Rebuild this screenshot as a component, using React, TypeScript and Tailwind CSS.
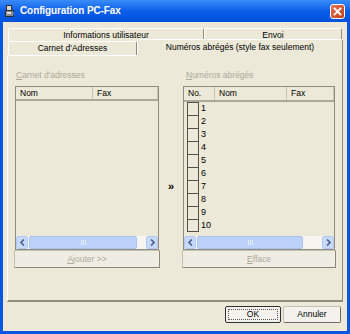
import React from 'react';

const grayText = 'text-[#aca899]';

function FaxIcon() {
  return (
    <svg width="12" height="14" viewBox="0 0 12 14">
      <rect x="2.5" y="1.5" width="5" height="5" fill="#d6d6d6" stroke="#2d2d2d" />
      <rect x="1.5" y="6.5" width="8" height="6" fill="#8c8c8c" stroke="#2d2d2d" />
      <rect x="3" y="8" width="4" height="2" fill="#e4e4e4" />
      <path d="M9 8 L11.5 9.5 L9 11 Z" fill="#2f6fe0" />
    </svg>
  );
}

function CloseButton() {
  return (
    <div className="ml-auto w-[15px] h-[15px] rounded-[3px] border border-white bg-gradient-to-br from-[#e7734d] to-[#c33c17] flex items-center justify-center">
      <svg width="9" height="9" viewBox="0 0 9 9">
        <path d="M1.5 1.5 L7.5 7.5 M7.5 1.5 L1.5 7.5" stroke="white" strokeWidth="1.8" strokeLinecap="square" />
      </svg>
    </div>
  );
}

function ArrowBtn({ dir }: { dir: 'left' | 'right' }) {
  return (
    <div className="w-[12px] h-full rounded-[2px] border border-[#b4c8f4] bg-[#c9d9fc] flex items-center justify-center">
      <svg width="5" height="7" viewBox="0 0 5 7">
        <path
          d={dir === 'left' ? 'M4 0.5 L1 3.5 L4 6.5' : 'M1 0.5 L4 3.5 L1 6.5'}
          fill="none"
          stroke="#4a5f8a"
          strokeWidth="1.6"
        />
      </svg>
    </div>
  );
}

function ScrollBar({ thumb, track }: { thumb: string; track: string }) {
  return (
    <div className="h-[13px] flex bg-[#f6f5ef]">
      <ArrowBtn dir="left" />
      <div className={`${thumb} ml-px h-full rounded-[2px] border border-[#a9c2f3] bg-[#bdd2fb] flex items-center justify-center gap-[1px]`}>
        <div className="w-px h-[5px] bg-[#e6eefe]" />
        <div className="w-px h-[5px] bg-[#e6eefe]" />
        <div className="w-px h-[5px] bg-[#e6eefe]" />
      </div>
      <div className={`${track} h-full`} />
      <ArrowBtn dir="right" />
    </div>
  );
}

function HeaderCell({ label, w }: { label: string; w?: string }) {
  return (
    <div className={`${w ?? 'flex-1'} h-full pl-[4px] flex items-center border-r border-r-[#c7c3b3] text-black`}>
      {label}
    </div>
  );
}

function DisabledButton({ first, rest }: { first: string; rest: string }) {
  return (
    <div className={`h-[18px] -mx-px border border-[#c3c0b1] border-b-[#8c897b] border-r-[#8c897b] bg-[#efede3] flex items-center justify-center ${grayText}`}>
      <span>
        <span className="underline">{first}</span>
        {rest}
      </span>
    </div>
  );
}

export default function App() {
  const rows = [1, 2, 3, 4, 5, 6, 7, 8, 9, 10];

  return (
    <div className="w-[350px] h-[334px] bg-[#0a56e2] flex flex-col font-['Liberation_Sans',Arial,sans-serif] text-[8.5px] leading-none select-none">
      {/* Title bar */}
      <div className="h-[22px] flex items-center pl-[4px] pr-[5px] bg-gradient-to-b from-[#3a8cf8] via-[#0a5de8] to-[#0052dd]">
        <FaxIcon />
        <span className="ml-[4px] text-white font-bold text-[10px] tracking-[-0.1px]">Configuration PC-Fax</span>
        <CloseButton />
      </div>

      {/* Client area */}
      <div className="flex-1 mx-[3px] mb-[3px] bg-[#ece9d8] flex flex-col">
        {/* Tabs */}
        <div className="pt-[6px] pl-[5px]">
          <div className="flex h-[13px]">
            <div className="w-[196px] border-t border-l border-white border-r border-r-[#8f8d80] rounded-t-[2px] flex items-center justify-center">
              Informations utilisateur
            </div>
            <div className="w-[138px] border-t border-l border-white border-r border-r-[#8f8d80] rounded-t-[2px] flex items-center justify-center">
              Envoi
            </div>
          </div>
          <div className="flex h-[14px] items-end">
            <div className="w-[129px] h-[14px] border-t border-l border-white border-r border-r-[#8f8d80] rounded-t-[2px] flex items-center justify-center">
              Carnet d'Adresses
            </div>
            <div className="relative z-10 w-[206px] h-[17px] -mb-px bg-[#ece9d8] border-t border-l border-white border-r border-r-[#8f8d80] rounded-t-[2px] flex items-center justify-center pb-[2px]">
              Numéros abrégés (style fax seulement)
            </div>
          </div>
        </div>

        {/* Tab panel */}
        <div className="ml-[4px] w-[336px] h-[247px] border-t border-l border-white border-r border-r-[#8f8d80] border-b-2 border-b-[#8f8d80] pt-[13px] px-[7px] flex">
          {/* Left: address book */}
          <div className="w-[144px] flex flex-col">
            <div className={`h-[12px] flex items-center pl-[1px] ${grayText}`}>
              <span>
                <span className="underline">C</span>arnet d'adresses
              </span>
            </div>
            <div className="mt-[5px] h-[164px] border border-[#8f8d80] flex flex-col">
              <div className="h-[14px] flex border-b-2 border-b-[#aca899]">
                <HeaderCell label="Nom" w="w-[77px]" />
                <HeaderCell label="Fax" />
              </div>
              <div className="flex-1" />
              <ScrollBar thumb="w-[108px]" track="w-[9px]" />
            </div>
            <DisabledButton first="A" rest="jouter >>" />
          </div>

          {/* Middle arrow */}
          <div className="w-[24px] flex items-center justify-center pt-[4px] text-[11px] font-bold text-black">
            »
          </div>

          {/* Right: speed dials */}
          <div className="w-[152px] flex flex-col">
            <div className={`h-[12px] flex items-center pl-[3px] ${grayText}`}>
              <span>
                <span className="underline">N</span>uméros abrégés
              </span>
            </div>
            <div className="mt-[5px] h-[164px] border border-[#8f8d80] flex flex-col">
              <div className="h-[15px] flex border-b-2 border-b-[#aca899]">
                <HeaderCell label="No." w="w-[31px]" />
                <HeaderCell label="Nom" w="w-[72px]" />
                <HeaderCell label="Fax" />
              </div>
              <div className="flex-1 flex flex-col">
                {rows.map((n) => (
                  <div key={n} className="h-[13px] flex items-center">
                    <div
                      className={`ml-[3px] w-[12px] h-[13px] border-x border-t border-[#555249] ${
                        n === 10 ? 'border-b' : ''
                      }`}
                    />
                    <span className="ml-[2px] text-black text-[9px]">{n}</span>
                  </div>
                ))}
              </div>
              <ScrollBar thumb="w-[106px]" track="w-[19px]" />
            </div>
            <DisabledButton first="E" rest="fface" />
          </div>
        </div>

        {/* Dialog buttons */}
        <div className="mt-[4px] flex justify-end gap-[2px] pr-[6px]">
          <div className="w-[56px] h-[17px] border border-[#2f2f2f] rounded-[2px] bg-[#f3f2ec] p-[2px]">
            <div className="w-full h-full border border-dotted border-[#555] flex items-center justify-center text-black">
              OK
            </div>
          </div>
          <div className="w-[58px] h-[17px] border border-[#c3c0b1] border-b-[#6f6d62] border-r-[#6f6d62] rounded-[2px] bg-[#f3f2ec] flex items-center justify-center text-black">
            Annuler
          </div>
        </div>
      </div>
    </div>
  );
}
